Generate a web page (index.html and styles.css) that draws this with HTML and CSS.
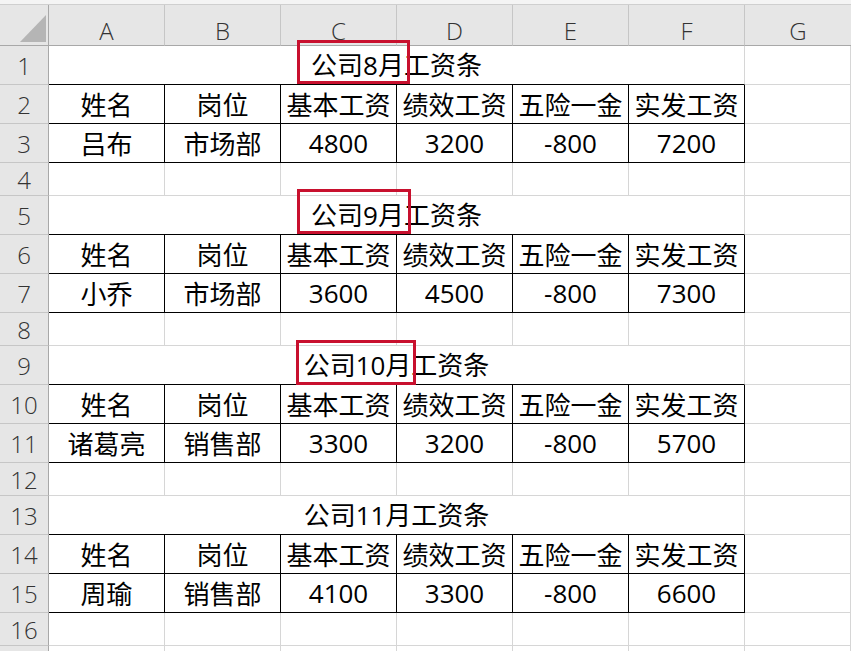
FILE: index.html
```html
<!DOCTYPE html>
<html lang="zh-CN">
<head>
<meta charset="utf-8">
<title>工资条</title>
<link rel="stylesheet" href="styles.css">
</head>
<body>
<div class="page">
  <div class="topbar"></div>
  <div class="sheet">
    <div class="corner"><svg width="48" height="40" viewBox="0 0 48 40"><polygon points="46,10 46,37 20,37" fill="#b5b5b5"/></svg></div>
    <div class="ch">A</div><div class="ch">B</div><div class="ch">C</div><div class="ch">D</div><div class="ch">E</div><div class="ch">F</div><div class="ch last">G</div>

    <div class="rh">1</div><div class="title">公司8月工资条</div><div class="c"></div>
    <div class="rh">2</div><div class="b">姓名</div><div class="b">岗位</div><div class="b">基本工资</div><div class="b">绩效工资</div><div class="b">五险一金</div><div class="b">实发工资</div><div class="c"></div>
    <div class="rh">3</div><div class="b">吕布</div><div class="b">市场部</div><div class="b">4800</div><div class="b">3200</div><div class="b">-800</div><div class="b">7200</div><div class="c"></div>
    <div class="rh">4</div><div class="c"></div><div class="c"></div><div class="c"></div><div class="c"></div><div class="c"></div><div class="c"></div><div class="c"></div>

    <div class="rh">5</div><div class="title">公司9月工资条</div><div class="c"></div>
    <div class="rh">6</div><div class="b">姓名</div><div class="b">岗位</div><div class="b">基本工资</div><div class="b">绩效工资</div><div class="b">五险一金</div><div class="b">实发工资</div><div class="c"></div>
    <div class="rh">7</div><div class="b">小乔</div><div class="b">市场部</div><div class="b">3600</div><div class="b">4500</div><div class="b">-800</div><div class="b">7300</div><div class="c"></div>
    <div class="rh">8</div><div class="c"></div><div class="c"></div><div class="c"></div><div class="c"></div><div class="c"></div><div class="c"></div><div class="c"></div>

    <div class="rh">9</div><div class="title">公司10月工资条</div><div class="c"></div>
    <div class="rh">10</div><div class="b">姓名</div><div class="b">岗位</div><div class="b">基本工资</div><div class="b">绩效工资</div><div class="b">五险一金</div><div class="b">实发工资</div><div class="c"></div>
    <div class="rh">11</div><div class="b">诸葛亮</div><div class="b">销售部</div><div class="b">3300</div><div class="b">3200</div><div class="b">-800</div><div class="b">5700</div><div class="c"></div>
    <div class="rh">12</div><div class="c"></div><div class="c"></div><div class="c"></div><div class="c"></div><div class="c"></div><div class="c"></div><div class="c"></div>

    <div class="rh">13</div><div class="title">公司11月工资条</div><div class="c"></div>
    <div class="rh">14</div><div class="b">姓名</div><div class="b">岗位</div><div class="b">基本工资</div><div class="b">绩效工资</div><div class="b">五险一金</div><div class="b">实发工资</div><div class="c"></div>
    <div class="rh">15</div><div class="b">周瑜</div><div class="b">销售部</div><div class="b">4100</div><div class="b">3300</div><div class="b">-800</div><div class="b">6600</div><div class="c"></div>
    <div class="rh">16</div><div class="c"></div><div class="c"></div><div class="c"></div><div class="c"></div><div class="c"></div><div class="c"></div><div class="c"></div>

    <div class="rh"></div><div class="c"></div><div class="c"></div><div class="c"></div><div class="c"></div><div class="c"></div><div class="c"></div><div class="c"></div>
  </div>
  <div class="mark mark1"></div>
  <div class="mark mark2"></div>
  <div class="mark mark3"></div>
</div>
</body>
</html>
```

FILE: styles.css
```css
html, body {
  margin: 0;
  padding: 0;
  background: #fff;
  overflow: hidden;
}

body {
  font-family: "Open Sans", "Noto Sans CJK SC", sans-serif;
  color: #000;
}

.page {
  position: relative;
  width: 851px;
  height: 651px;
  overflow: hidden;
}

.topbar {
  height: 4px;
  background: #f4f4f4;
  border-bottom: 1px solid #cfcfcf;
}

.sheet {
  display: grid;
  grid-template-columns: 49px repeat(6, 116px) 106px;
  grid-template-rows: 41px
    39px 39px 39px 33px
    39px 39px 39px 33px
    39px 39px 39px 33px
    39px 39px 39px 33px
    30px;
}

.sheet > div {
  box-sizing: border-box;
  display: flex;
  align-items: center;
  justify-content: center;
  white-space: nowrap;
}

.corner {
  background: #e6e6e6;
  border-right: 1px solid #a8a8a8;
  border-bottom: 1px solid #a8a8a8;
}

.corner svg {
  display: block;
  align-self: flex-start;
}

.ch {
  background: #e6e6e6;
  border-right: 1px solid #c6c6c6;
  border-bottom: 1px solid #a8a8a8;
  font-family: "Open Sans", sans-serif;
  font-weight: 300;
  font-size: 24px;
  color: #333;
  padding-top: 10px;
}

.ch.last {
  border-right: none;
}

.rh {
  background: #e6e6e6;
  border-right: 1px solid #a8a8a8;
  border-bottom: 1px solid #c6c6c6;
  font-family: "Open Sans", sans-serif;
  font-weight: 300;
  font-size: 24px;
  color: #333;
}

.c {
  border-right: 1px solid #d6d6d6;
  border-bottom: 1px solid #d6d6d6;
}

.b {
  border-right: 1px solid #000;
  border-bottom: 1px solid #000;
  font-size: 26px;
  padding-bottom: 1px;
}

.title {
  grid-column: span 6;
  border-right: 1px solid #d6d6d6;
  border-bottom: 1px solid #000;
  font-size: 26px;
  padding-bottom: 3px;
}

.mark {
  position: absolute;
  box-sizing: border-box;
  border: 3px solid #c8102e;
}

.mark1 {
  left: 297px;
  top: 40px;
  width: 113px;
  height: 44px;
}

.mark2 {
  left: 297px;
  top: 189px;
  width: 114px;
  height: 45px;
}

.mark3 {
  left: 296px;
  top: 340px;
  width: 120px;
  height: 45px;
}
```
